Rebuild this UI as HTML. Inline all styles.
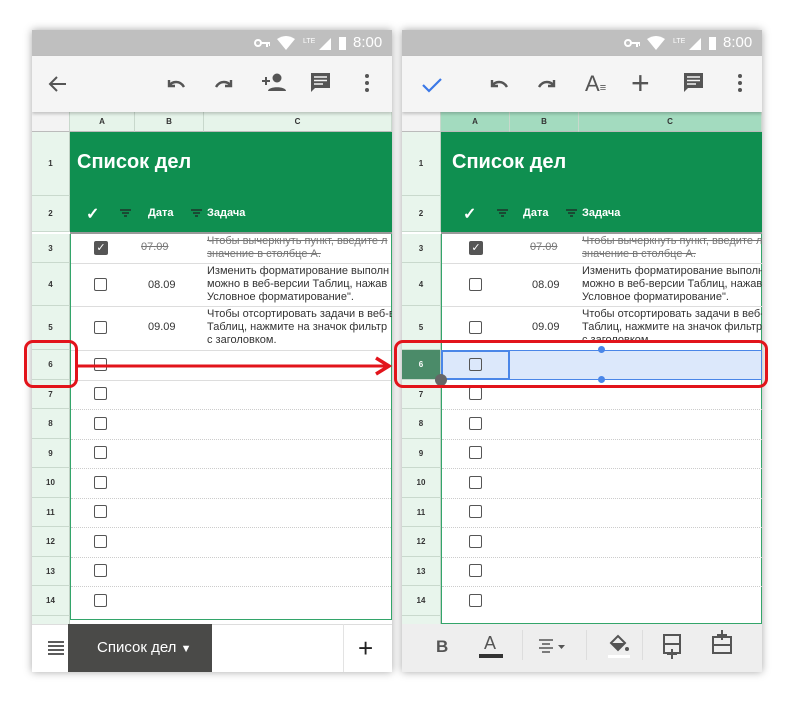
<!DOCTYPE html>
<html><head><meta charset="utf-8"><style>
*{margin:0;padding:0;box-sizing:border-box}
body{width:794px;height:704px;background:#fff;position:relative;overflow:hidden;font-family:"Liberation Sans",sans-serif}
.ph{position:absolute;top:30px;width:360px;height:642px;background:#fff;overflow:hidden;box-shadow:0 0 8px rgba(0,0,0,.35)}
.a{position:absolute}
.sb{left:0;top:0;width:360px;height:26px;background:#bfbfbf;color:#fff;font-size:15px}
.tb{left:0;top:26px;width:360px;height:56px;background:#f5f5f5;box-shadow:0 2px 3px rgba(0,0,0,.2);z-index:2}
.ch{top:82px;height:20px;font-size:8px;font-weight:bold;color:#333;text-align:center;line-height:20px;border-right:1px solid #c8d8cc;border-bottom:1px solid #bbb}
.rh{left:0;width:38px;background:#e8f5ec;font-size:8px;font-weight:bold;color:#333;text-align:center;border-bottom:1px solid #c9d9cd;border-right:1px solid #c0d0c4}
.green{top:102px;height:100px;background:#0f8f50}
.t1{color:#fff;font-weight:bold;font-size:20px}
.cb{width:13px;height:13px;border:1.6px solid #555;border-radius:2px}
.txt{font-size:11px;color:#333;line-height:13px}
.st{color:#777;text-decoration:line-through}
</style></head><body>

<!-- LEFT PHONE -->
<div class="ph" style="left:32px">
 <div class="a sb">
  <svg class="a" style="left:222px;top:9px" width="16" height="8"><circle cx="4" cy="4" r="3" fill="none" stroke="#fff" stroke-width="2"/><path d="M7 4h9M13 4v4M16 4v3" stroke="#fff" stroke-width="2"/></svg>
  <svg class="a" style="left:245px;top:6px" width="120" height="16"><path d="M0 3 Q9 -3 18 3 L9 14Z" fill="#fff"/><text x="26" y="7" font-size="7" fill="#fff">LTE</text><path d="M42 14 L54 2 L54 14Z" fill="#fff"/><rect x="62" y="1" width="7" height="13" fill="#fff"/></svg>
  <span class="a" style="left:321px;top:4px">8:00</span></div>
 <div class="a tb">
  <svg class="a" style="left:14px;top:16px" width="24" height="24"><path d="M20 12H5M11 5l-7 7 7 7" stroke="#555" stroke-width="2" fill="none"/></svg>
  <svg class="a" style="left:132px;top:16px" width="24" height="24"><path d="M5 8v6h6M5 14c3-5 11-6 15 1" stroke="#555" stroke-width="2.4" fill="none"/></svg>
  <svg class="a" style="left:180px;top:16px" width="24" height="24"><path d="M19 8v6h-6M19 14c-3-5-11-6-15 1" stroke="#555" stroke-width="2.4" fill="none"/></svg>
  <svg class="a" style="left:228px;top:15px" width="28" height="24"><circle cx="17" cy="7" r="4.5" fill="#555"/><path d="M8 20c0-5 18-5 18 0z" fill="#555"/><path d="M2 10h8M6 6v8" stroke="#555" stroke-width="2"/></svg>
  <svg class="a" style="left:277px;top:15px" width="24" height="24"><path d="M2 2h19v15H6l-4 4z" fill="#555"/><path d="M5 6h13M5 9.5h13M5 13h9" stroke="#f5f5f5" stroke-width="1.5"/></svg>
  <svg class="a" style="left:332px;top:16px" width="6" height="24"><circle cx="3" cy="4" r="2" fill="#555"/><circle cx="3" cy="11" r="2" fill="#555"/><circle cx="3" cy="18" r="2" fill="#555"/></svg>
 </div>
 <div class="a ch" style="left:0;width:38px;background:#f3f3f3"></div>
 <div class="a ch" style="left:38px;width:65px;background:#e6f4ea">A</div>
 <div class="a ch" style="left:103px;width:69px;background:#e6f4ea">B</div>
 <div class="a ch" style="left:172px;width:188px;background:#e6f4ea">C</div>
 <div class="a rh" style="top:102px;height:64px;line-height:64px">1</div>
 <div class="a rh" style="top:166px;height:36px;line-height:36px">2</div>
 <div class="a green" style="left:38px;width:322px"></div>
 <div class="a t1" style="left:45px;top:121px">Список дел</div>
 <div class="a" style="left:54px;top:174px;color:#fff;font-size:16px;font-weight:bold">✓</div>
 <svg class="a" style="left:88px;top:179px" width="11" height="8"><path d="M0 1h11M2 4h7M4 7h3" stroke="#222" stroke-width="1.3"/></svg>
 <div class="a" style="left:116px;top:177px;color:#fff;font-size:11px;font-weight:bold">Дата</div>
 <svg class="a" style="left:159px;top:179px" width="11" height="8"><path d="M0 1h11M2 4h7M4 7h3" stroke="#222" stroke-width="1.3"/></svg>
 <div class="a" style="left:175px;top:177px;color:#fff;font-size:11px;font-weight:bold">Задача</div>
 <div class="a" style="left:38px;top:202px;width:322px;height:2px;background:#999"></div>
 <div class="a" style="left:38px;top:204px;width:322px;height:386px;border:1px solid #33a56a;border-top:none"></div>
 <div class="a rh" style="top:204px;height:29px;line-height:29px">3</div>
 <div class="a rh" style="top:233px;height:43px;line-height:43px">4</div>
 <div class="a rh" style="top:276px;height:44px;line-height:44px">5</div>
 <div class="a rh" style="top:320px;height:30px;line-height:30px">6</div>
 <div class="a rh" style="top:350px;height:29px;line-height:29px">7</div>
 <div class="a rh" style="top:379px;height:30px;line-height:30px">8</div>
 <div class="a rh" style="top:409px;height:29px;line-height:29px">9</div>
 <div class="a rh" style="top:438px;height:30px;line-height:30px">10</div>
 <div class="a rh" style="top:468px;height:29px;line-height:29px">11</div>
 <div class="a rh" style="top:497px;height:30px;line-height:30px">12</div>
 <div class="a rh" style="top:527px;height:29px;line-height:29px">13</div>
 <div class="a rh" style="top:556px;height:30px;line-height:30px">14</div>
 <div class="a rh" style="top:586px;height:10px"></div>
 <div class="a" style="left:62px;top:211px;width:14px;height:14px;background:#555;border-radius:2px;color:#fff;font-size:11px;text-align:center;line-height:14px">✓</div>
 <div class="a txt st" style="left:109px;top:211px">07.09</div>
 <div class="a txt st" style="left:175px;top:205px;white-space:nowrap">Чтобы вычеркнуть пункт, введите л<br>значение в столбце А.</div>
 <div class="a txt" style="left:116px;top:249px">08.09</div>
 <div class="a txt" style="left:175px;top:235px;white-space:nowrap">Изменить форматирование выполн<br>можно в веб-версии Таблиц, нажав<br>Условное форматирование".</div>
 <div class="a txt" style="left:116px;top:291px">09.09</div>
 <div class="a txt" style="left:175px;top:278px;white-space:nowrap">Чтобы отсортировать задачи в веб-в<br>Таблиц, нажмите на значок фильтр<br>с заголовком.</div>
 <div class="a cb" style="left:62px;top:248px"></div><div class="a cb" style="left:62px;top:291px"></div>
 <div class="a cb" style="left:62px;top:328px"></div><div class="a cb" style="left:62px;top:357px"></div>
 <div class="a cb" style="left:62px;top:387px"></div><div class="a cb" style="left:62px;top:416px"></div>
 <div class="a cb" style="left:62px;top:446px"></div><div class="a cb" style="left:62px;top:475px"></div>
 <div class="a cb" style="left:62px;top:505px"></div><div class="a cb" style="left:62px;top:534px"></div>
 <div class="a cb" style="left:62px;top:564px"></div>
 <div class="a" style="left:39px;top:233px;width:320px;border-top:1px solid #ddd"></div>
 <div class="a" style="left:39px;top:276px;width:320px;border-top:1px solid #ddd"></div>
 <div class="a" style="left:39px;top:320px;width:320px;border-top:1px solid #ddd"></div>
 <div class="a" style="left:39px;top:350px;width:320px;border-top:1px solid #ddd"></div>
 <div class="a" style="left:39px;top:379px;width:320px;border-top:1px dotted #ccc"></div>
 <div class="a" style="left:39px;top:409px;width:320px;border-top:1px dotted #ccc"></div>
 <div class="a" style="left:39px;top:438px;width:320px;border-top:1px dotted #ccc"></div>
 <div class="a" style="left:39px;top:468px;width:320px;border-top:1px dotted #ccc"></div>
 <div class="a" style="left:39px;top:497px;width:320px;border-top:1px dotted #ccc"></div>
 <div class="a" style="left:39px;top:527px;width:320px;border-top:1px dotted #ccc"></div>
 <div class="a" style="left:39px;top:556px;width:320px;border-top:1px dotted #ccc"></div>
 <div class="a" style="left:0;top:594px;width:360px;height:48px;background:#fff;border-top:1px solid #ddd"></div>
 <svg class="a" style="left:15px;top:610px" width="18" height="16"><path d="M1 2h16M1 6h16M1 10h16M1 14h16" stroke="#444" stroke-width="1.8"/></svg>
 <div class="a" style="left:36px;top:594px;width:144px;height:48px;background:#4a4a48;color:#fff;font-size:15px;line-height:48px;padding-left:29px">Список дел <span style="font-size:11px">▼</span></div>
 <div class="a" style="left:311px;top:594px;height:48px;border-left:1px solid #e3e3e3"></div>
 <div class="a" style="left:326px;top:603px;font-size:26px;color:#222">+</div>
</div>

<!-- RIGHT PHONE -->
<div class="ph" style="left:402px">
 <div class="a sb">
  <svg class="a" style="left:222px;top:9px" width="16" height="8"><circle cx="4" cy="4" r="3" fill="none" stroke="#fff" stroke-width="2"/><path d="M7 4h9M13 4v4M16 4v3" stroke="#fff" stroke-width="2"/></svg>
  <svg class="a" style="left:245px;top:6px" width="120" height="16"><path d="M0 3 Q9 -3 18 3 L9 14Z" fill="#fff"/><text x="26" y="7" font-size="7" fill="#fff">LTE</text><path d="M42 14 L54 2 L54 14Z" fill="#fff"/><rect x="62" y="1" width="7" height="13" fill="#fff"/></svg>
  <span class="a" style="left:321px;top:4px">8:00</span></div>
 <div class="a tb">
  <svg class="a" style="left:18px;top:17px" width="24" height="24"><path d="M3 12l6 6L21 6" stroke="#3b78e7" stroke-width="2.2" fill="none"/></svg>
  <svg class="a" style="left:85px;top:16px" width="24" height="24"><path d="M5 8v6h6M5 14c3-5 11-6 15 1" stroke="#555" stroke-width="2.4" fill="none"/></svg>
  <svg class="a" style="left:133px;top:16px" width="24" height="24"><path d="M19 8v6h-6M19 14c-3-5-11-6-15 1" stroke="#555" stroke-width="2.4" fill="none"/></svg>
  <div class="a" style="left:183px;top:15px;font-size:22px;color:#555">A<span style="font-size:11px;letter-spacing:-2px">≡</span></div>
  <div class="a" style="left:229px;top:9px;font-size:32px;color:#555;font-weight:300">+</div>
  <svg class="a" style="left:280px;top:15px" width="24" height="24"><path d="M2 2h19v15H6l-4 4z" fill="#555"/><path d="M5 6h13M5 9.5h13M5 13h9" stroke="#f5f5f5" stroke-width="1.5"/></svg>
  <svg class="a" style="left:335px;top:16px" width="6" height="24"><circle cx="3" cy="4" r="2" fill="#555"/><circle cx="3" cy="11" r="2" fill="#555"/><circle cx="3" cy="18" r="2" fill="#555"/></svg>
 </div>
 <div class="a ch" style="left:0;width:39px;background:#f3f3f3"></div>
 <div class="a ch" style="left:39px;width:69px;background:#a3dbbf">A</div>
 <div class="a ch" style="left:108px;width:69px;background:#a3dbbf">B</div>
 <div class="a ch" style="left:177px;width:183px;background:#a3dbbf">C</div>
 <div class="a rh" style="top:102px;height:64px;line-height:64px;width:39px">1</div>
 <div class="a rh" style="top:166px;height:36px;line-height:36px;width:39px">2</div>
 <div class="a green" style="left:39px;width:321px"></div>
 <div class="a t1" style="left:50px;top:121px">Список дел</div>
 <div class="a" style="left:61px;top:174px;color:#fff;font-size:16px;font-weight:bold">✓</div>
 <svg class="a" style="left:95px;top:179px" width="11" height="8"><path d="M0 1h11M2 4h7M4 7h3" stroke="#222" stroke-width="1.3"/></svg>
 <div class="a" style="left:121px;top:177px;color:#fff;font-size:11px;font-weight:bold">Дата</div>
 <svg class="a" style="left:164px;top:179px" width="11" height="8"><path d="M0 1h11M2 4h7M4 7h3" stroke="#222" stroke-width="1.3"/></svg>
 <div class="a" style="left:180px;top:177px;color:#fff;font-size:11px;font-weight:bold">Задача</div>
 <div class="a" style="left:39px;top:202px;width:321px;height:2px;background:#999"></div>
 <div class="a" style="left:39px;top:204px;width:321px;height:390px;border:1px solid #33a56a;border-top:none"></div>
 <div class="a rh" style="top:204px;height:29px;line-height:29px;width:39px">3</div>
 <div class="a rh" style="top:233px;height:43px;line-height:43px;width:39px">4</div>
 <div class="a rh" style="top:276px;height:44px;line-height:44px;width:39px">5</div>
 <div class="a rh" style="top:320px;height:30px;line-height:30px;width:39px;background:#4b8b69;color:#fff">6</div>
 <div class="a rh" style="top:350px;height:29px;line-height:29px;width:39px">7</div>
 <div class="a rh" style="top:379px;height:30px;line-height:30px;width:39px">8</div>
 <div class="a rh" style="top:409px;height:29px;line-height:29px;width:39px">9</div>
 <div class="a rh" style="top:438px;height:30px;line-height:30px;width:39px">10</div>
 <div class="a rh" style="top:468px;height:29px;line-height:29px;width:39px">11</div>
 <div class="a rh" style="top:497px;height:30px;line-height:30px;width:39px">12</div>
 <div class="a rh" style="top:527px;height:29px;line-height:29px;width:39px">13</div>
 <div class="a rh" style="top:556px;height:30px;line-height:30px;width:39px">14</div>
 <div class="a rh" style="top:586px;height:10px;width:39px"></div>
 <div class="a" style="left:67px;top:211px;width:14px;height:14px;background:#555;border-radius:2px;color:#fff;font-size:11px;text-align:center;line-height:14px">✓</div>
 <div class="a txt st" style="left:128px;top:211px">07.09</div>
 <div class="a txt st" style="left:180px;top:205px;white-space:nowrap">Чтобы вычеркнуть пункт, введите л<br>значение в столбце А.</div>
 <div class="a txt" style="left:130px;top:249px">08.09</div>
 <div class="a txt" style="left:180px;top:235px;white-space:nowrap">Изменить форматирование выполн<br>можно в веб-версии Таблиц, нажав<br>Условное форматирование".</div>
 <div class="a txt" style="left:130px;top:291px">09.09</div>
 <div class="a txt" style="left:180px;top:278px;white-space:nowrap">Чтобы отсортировать задачи в веб-в<br>Таблиц, нажмите на значок фильтр<br>с заголовком.</div>
 <div class="a" style="left:39px;top:320px;width:321px;height:30px;background:#dce8fb;border:1px solid #4a86e8"></div>
 <div class="a" style="left:39px;top:320px;width:69px;height:30px;border:2px solid #4a86e8"></div>
 <div class="a" style="left:196px;top:316px;width:7px;height:7px;border-radius:50%;background:#4a86e8"></div>
 <div class="a" style="left:196px;top:346px;width:7px;height:7px;border-radius:50%;background:#4a86e8"></div>
 <div class="a" style="left:33px;top:344px;width:12px;height:12px;border-radius:50%;background:#666"></div>
 <div class="a cb" style="left:67px;top:248px"></div><div class="a cb" style="left:67px;top:291px"></div>
 <div class="a cb" style="left:67px;top:328px"></div><div class="a cb" style="left:67px;top:357px"></div>
 <div class="a cb" style="left:67px;top:387px"></div><div class="a cb" style="left:67px;top:416px"></div>
 <div class="a cb" style="left:67px;top:446px"></div><div class="a cb" style="left:67px;top:475px"></div>
 <div class="a cb" style="left:67px;top:505px"></div><div class="a cb" style="left:67px;top:534px"></div>
 <div class="a cb" style="left:67px;top:564px"></div>
 <div class="a" style="left:40px;top:233px;width:320px;border-top:1px solid #ddd"></div>
 <div class="a" style="left:40px;top:276px;width:320px;border-top:1px solid #ddd"></div>
 <div class="a" style="left:40px;top:379px;width:320px;border-top:1px dotted #ccc"></div>
 <div class="a" style="left:40px;top:409px;width:320px;border-top:1px dotted #ccc"></div>
 <div class="a" style="left:40px;top:438px;width:320px;border-top:1px dotted #ccc"></div>
 <div class="a" style="left:40px;top:468px;width:320px;border-top:1px dotted #ccc"></div>
 <div class="a" style="left:40px;top:497px;width:320px;border-top:1px dotted #ccc"></div>
 <div class="a" style="left:40px;top:527px;width:320px;border-top:1px dotted #ccc"></div>
 <div class="a" style="left:40px;top:556px;width:320px;border-top:1px dotted #ccc"></div>
 <div class="a" style="left:0;top:594px;width:360px;height:48px;background:#eeeeee"></div>
 <div class="a" style="left:34px;top:607px;font-size:17px;font-weight:bold;color:#555">B</div>
 <div class="a" style="left:82px;top:603px;font-size:18px;color:#555">A</div>
 <div class="a" style="left:77px;top:624px;width:24px;height:4px;background:#333"></div>
 <div class="a" style="left:120px;top:600px;height:30px;border-left:1px solid #ddd"></div>
 <svg class="a" style="left:136px;top:608px" width="32" height="18"><path d="M1 2h14M4 6h8M1 10h14M4 14h8" stroke="#555" stroke-width="1.6"/><path d="M20 7h7l-3.5 4z" fill="#555"/></svg>
 <div class="a" style="left:184px;top:600px;height:30px;border-left:1px solid #ddd"></div>
 <svg class="a" style="left:206px;top:604px" width="22" height="26"><path d="M3 9l7-7 7 7-7 7z" fill="none" stroke="#555" stroke-width="2"/><path d="M3 9h14l-7 7z" fill="#555"/><circle cx="19" cy="15" r="2" fill="#555"/><rect x="0" y="21" width="22" height="3" fill="#fff"/></svg>
 <div class="a" style="left:240px;top:600px;height:30px;border-left:1px solid #ddd"></div>
 <svg class="a" style="left:261px;top:604px" width="20" height="26"><rect x="1" y="1" width="16" height="18" fill="none" stroke="#555" stroke-width="2"/><path d="M1 10h16" stroke="#555" stroke-width="2"/><path d="M9 15v10M4 20h10" stroke="#555" stroke-width="2"/></svg>
 <svg class="a" style="left:310px;top:600px" width="22" height="26"><rect x="1" y="7" width="18" height="16" fill="none" stroke="#555" stroke-width="2"/><path d="M1 15h18" stroke="#555" stroke-width="2"/><path d="M10 0v10M5 5h10" stroke="#555" stroke-width="2"/></svg>
</div>

<!-- red highlights -->
<div class="a" style="left:24px;top:340px;width:54px;height:48px;border:3px solid #e2141b;border-radius:9px"></div>
<div class="a" style="left:394px;top:340px;width:374px;height:48px;border:3px solid #e2141b;border-radius:9px"></div>
<svg class="a" style="left:76px;top:354px" width="320" height="26"><path d="M2 12H312" stroke="#e2141b" stroke-width="3"/><path d="M300 4l13 8-13 8" stroke="#e2141b" stroke-width="3.5" fill="none"/></svg>
</body></html>
